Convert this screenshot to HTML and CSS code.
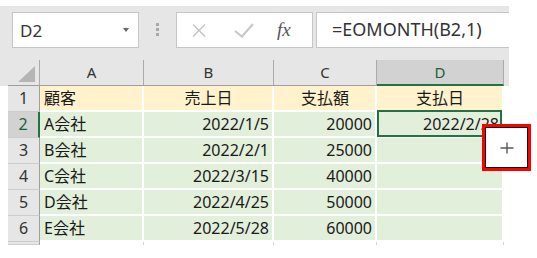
FILE: index.html
```html
<!DOCTYPE html>
<html lang="ja">
<head>
    <meta charset="UTF-8">
    <title>EOMONTH</title>
    <link rel="stylesheet" href="styles.css">
</head>
<body>
    <div class="sheet">
        <div class="bar">
            <div class="namebox"><span>D2</span><span class="caret"></span></div>
            <div class="grip"><i></i><i></i><i></i></div>
            <div class="fx-buttons">
                <svg class="icon-x" width="14" height="13" viewBox="0 0 14 13">
                    <path d="M1 0.5 L13 12.5 M13 0.5 L1 12.5" stroke="#c3c3c3" stroke-width="1.4" fill="none"/>
                </svg>
                <svg class="icon-check" width="20" height="15" viewBox="0 0 20 15">
                    <path d="M1 8 L8 13.5 L19 1" stroke="#c8c8c8" stroke-width="2.2" fill="none"/>
                </svg>
                <span class="fx">fx</span>
            </div>
            <div class="formula">=EOMONTH(B2,1)</div>
        </div>

        <div class="row head">
            <div class="corner"></div>
            <div class="ch col-a">A</div>
            <div class="ch col-b">B</div>
            <div class="ch col-c">C</div>
            <div class="ch col-d active">D</div>
        </div>

        <div class="row">
            <div class="rh">1</div>
            <div class="cell title col-a">顧客</div>
            <div class="cell title col-b center">売上日</div>
            <div class="cell title col-c center">支払額</div>
            <div class="cell title col-d center">支払日</div>
        </div>
        <div class="row">
            <div class="rh active">2</div>
            <div class="cell col-a">A会社</div>
            <div class="cell col-b num">2022/1/5</div>
            <div class="cell col-c num">20000</div>
            <div class="cell col-d num selected">2022/2/28</div>
        </div>
        <div class="row">
            <div class="rh">3</div>
            <div class="cell col-a">B会社</div>
            <div class="cell col-b num">2022/2/1</div>
            <div class="cell col-c num">25000</div>
            <div class="cell col-d num"></div>
        </div>
        <div class="row">
            <div class="rh">4</div>
            <div class="cell col-a">C会社</div>
            <div class="cell col-b num">2022/3/15</div>
            <div class="cell col-c num">40000</div>
            <div class="cell col-d num"></div>
        </div>
        <div class="row">
            <div class="rh">5</div>
            <div class="cell col-a">D会社</div>
            <div class="cell col-b num">2022/4/25</div>
            <div class="cell col-c num">50000</div>
            <div class="cell col-d num"></div>
        </div>
        <div class="row">
            <div class="rh">6</div>
            <div class="cell col-a">E会社</div>
            <div class="cell col-b num">2022/5/28</div>
            <div class="cell col-c num">60000</div>
            <div class="cell col-d num"></div>
        </div>
        <div class="row stub">
            <div class="rh"></div>
            <div class="blank col-a"></div>
            <div class="blank col-b"></div>
            <div class="blank col-c"></div>
            <div class="blank col-d"></div>
        </div>

        <div class="fill-handle">
            <svg width="14" height="12" viewBox="0 0 14 12">
                <path d="M0.5 6 H13.5 M7 0.5 V11.5" stroke="#595959" stroke-width="1.4" fill="none"/>
            </svg>
        </div>
    </div>
</body>
</html>
```

FILE: styles.css
```css
body {
    margin: 0;
    background: #fff;
    font-family: 'Noto Sans', 'Noto Sans CJK JP', sans-serif;
    color: #1a1a1a;
}

.sheet {
    position: relative;
    width: 509px;
    margin-top: 6px;
}

/* formula bar */
.bar {
    display: flex;
    align-items: flex-start;
    height: 54px;
    padding: 6px 0 0 12px;
    box-sizing: border-box;
    background: #e6e6e6;
}

.namebox {
    display: flex;
    align-items: center;
    width: 127px;
    height: 36px;
    padding-left: 7px;
    box-sizing: border-box;
    border: 1px solid #c6c6c6;
    background: #fff;
    font-size: 17px;
    color: #333;
}

.caret {
    margin-left: auto;
    margin-right: 9px;
    border-left: 3px solid transparent;
    border-right: 3px solid transparent;
    border-top: 4px solid #666;
}

.grip {
    display: flex;
    flex-direction: column;
    gap: 2px;
    margin: 11px 0 0 17px;
}

.grip i {
    display: block;
    width: 3px;
    height: 3px;
    background: #a8a8a8;
}

.fx-buttons {
    display: flex;
    align-items: center;
    width: 137px;
    height: 36px;
    margin-left: 17px;
    box-sizing: border-box;
    border: 1px solid #c6c6c6;
    background: #fff;
}

.icon-x {
    margin-left: 15px;
}

.icon-check {
    margin-left: 28px;
}

.fx {
    margin-left: 23px;
    font-family: 'Liberation Serif', serif;
    font-style: italic;
    font-size: 19px;
    color: #555;
}

.formula {
    flex: 1;
    height: 36px;
    margin-left: 3px;
    padding-left: 15px;
    box-sizing: border-box;
    border: 1px solid #c6c6c6;
    border-right: none;
    background: #fff;
    font-size: 18px;
    line-height: 33px;
    color: #333;
}

/* grid */
.row {
    display: flex;
    height: 26px;
    padding-left: 8px;
}

.row.head {
    background: #e6e6e6;
}

.corner {
    position: relative;
    width: 32px;
    box-sizing: border-box;
    border-right: 1px solid #ababab;
    border-bottom: 1px solid #9e9e9e;
}

.corner::after {
    content: "";
    position: absolute;
    right: 4px;
    bottom: 3px;
    border-left: 17px solid transparent;
    border-bottom: 16px solid #b5b5b5;
}

.ch {
    box-sizing: border-box;
    border-right: 1px solid #ababab;
    border-bottom: 1px solid #9e9e9e;
    text-align: center;
    font-size: 15px;
    line-height: 25px;
    color: #333;
}

.ch.active {
    background: #d2d2d2;
    border-bottom: 2px solid #217346;
    color: #1d5f3a;
}

.col-a { width: 104px; }
.col-b { width: 130px; }
.col-c { width: 103px; }
.col-d { width: 127px; }

.rh {
    width: 32px;
    box-sizing: border-box;
    border-right: 1px solid #9e9e9e;
    border-bottom: 1px solid #cdcdcd;
    background: #e6e6e6;
    text-align: center;
    font-size: 16px;
    line-height: 25px;
    color: #333;
}

.rh.active {
    background: #d2d2d2;
    border-right: 2px solid #217346;
    color: #1d5f3a;
}

.cell {
    position: relative;
    box-sizing: border-box;
    padding: 0 3px 0 4px;
    border-right: 2px solid #fff;
    border-bottom: 2px solid #fff;
    background: #e2efda;
    font-size: 16px;
    line-height: 24px;
    white-space: nowrap;
}

.cell.title {
    background: #fff2cc;
}

.cell.center {
    text-align: center;
}

.cell.num {
    text-align: right;
}

.cell.selected::after {
    content: "";
    position: absolute;
    top: -2px;
    left: 0;
    right: 0;
    bottom: -1px;
    border: 2px solid #217346;
}

.row.stub {
    height: 3px;
    overflow: hidden;
}

.blank {
    box-sizing: border-box;
    border-right: 1px solid #d4d4d4;
}

.fill-handle {
    position: absolute;
    left: 482px;
    top: 118px;
    display: flex;
    align-items: center;
    justify-content: center;
    width: 49px;
    height: 47px;
    box-sizing: border-box;
    border: 3px solid #f00;
    box-shadow: inset 0 0 0 1px #000;
    background: #fff;
}
```
